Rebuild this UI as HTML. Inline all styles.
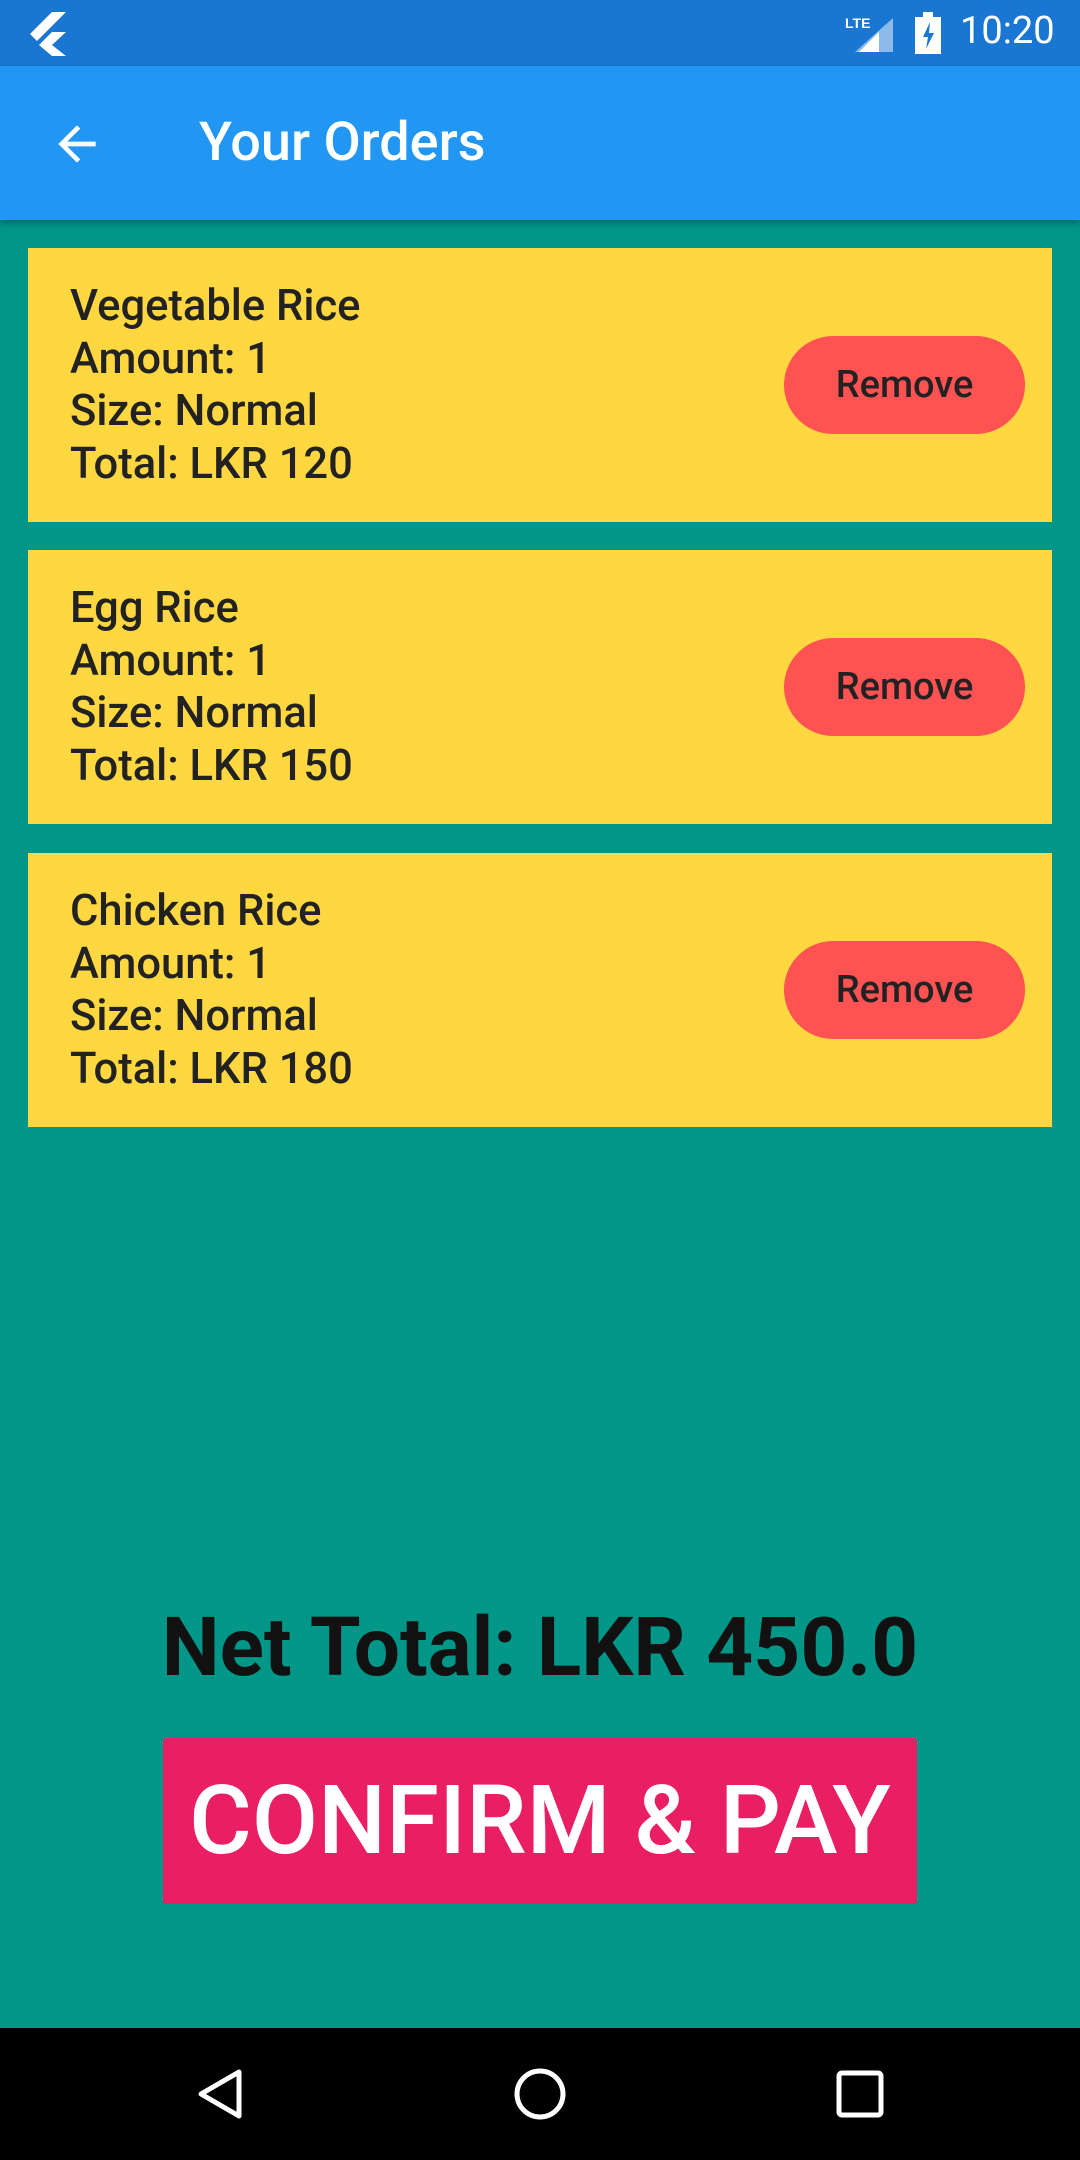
<!DOCTYPE html>
<html><head><meta charset="utf-8"><style>
*{margin:0;padding:0;box-sizing:border-box}
body{width:1080px;height:2160px;background:#009688;font-family:"Roboto","Liberation Sans",sans-serif;position:relative;overflow:hidden}
.sb{position:absolute;top:0;left:0;width:1080px;height:66px;background:#1976D2;color:#fff}
.ab{position:absolute;top:66px;left:0;width:1080px;height:154px;background:#2196F3;box-shadow:0 3px 6px rgba(0,0,0,.3)}
.ab .t{position:absolute;left:199px;top:45px;font-size:54px;color:#fff;font-weight:500}
.card{position:absolute;left:28px;width:1024px;height:274px;background:#FFD740}
.card .tx{position:absolute;left:42px;top:32px;font-size:43.5px;line-height:52.5px;color:#222;font-weight:500}
.card .rm{position:absolute;left:756px;top:88px;width:241px;height:98px;border-radius:49px;background:#FF5252;color:#222;font-size:38px;text-align:center;line-height:98px;font-weight:500}
.net{position:absolute;top:1600px;left:0;width:1080px;text-align:center;font-size:82px;font-weight:bold;color:#111}
.pay{position:absolute;left:163px;top:1738px;width:754px;height:166px;background:#E91E63;color:#fff;font-size:96px;text-align:center;line-height:166px;border-radius:3px;font-weight:500}
.nav{position:absolute;top:2028px;left:0;width:1080px;height:132px;background:#000}
</style></head><body>
<div class="sb">
<svg style="position:absolute;left:30px;top:12px" width="40" height="44" viewBox="0 0 40 44"><path d="M22 0L0 22l7 7L36 0z M22 20L9 33l13 11h14L22 33l14-13z" fill="#fff"/></svg>
<svg style="position:absolute;left:845px;top:14px" width="48" height="40" viewBox="0 0 48 40"><text x="0" y="14" font-size="14" fill="#fff" font-family="Liberation Sans" font-weight="bold">LTE</text><path d="M48 4V38H10z" fill="#fff" opacity=".5"/><path d="M34 18V38H14z" fill="#fff"/></svg>
<svg style="position:absolute;left:915px;top:12px" width="26" height="42" viewBox="0 0 26 42"><rect x="0" y="5" width="26" height="37" fill="#fff"/><rect x="8" y="0" width="10" height="6" fill="#fff"/><path d="M15 10l-7 15h5l-2 12 8-16h-5z" fill="#1976D2"/></svg>
<div style="position:absolute;left:960px;top:9px;font-size:38px;color:#fff">10:20</div>
</div>
<div class="ab">
<svg style="position:absolute;left:49px;top:50px" width="56" height="56" viewBox="0 0 24 24"><path d="M20 11H7.83l5.59-5.59L12 4l-8 8 8 8 1.41-1.41L7.83 13H20v-2z" fill="#fff"/></svg>
<div class="t">Your Orders</div></div>
<div class="card" style="top:248px"><div class="tx">Vegetable Rice<br>Amount: 1<br>Size: Normal<br>Total: LKR 120</div><div class="rm">Remove</div></div>
<div class="card" style="top:550px"><div class="tx">Egg Rice<br>Amount: 1<br>Size: Normal<br>Total: LKR 150</div><div class="rm">Remove</div></div>
<div class="card" style="top:853px"><div class="tx">Chicken Rice<br>Amount: 1<br>Size: Normal<br>Total: LKR 180</div><div class="rm">Remove</div></div>
<div class="net">Net Total: LKR 450.0</div>
<div class="pay">CONFIRM &amp; PAY</div>
<div class="nav">
<svg style="position:absolute;left:196px;top:66px;transform:translateY(-50%)" width="48" height="52" viewBox="0 0 48 52"><path d="M43 4L5 26l38 22z" fill="none" stroke="#fff" stroke-width="5" stroke-linejoin="round"/></svg>
<svg style="position:absolute;left:514px;top:40px" width="52" height="52" viewBox="0 0 52 52"><circle cx="26" cy="26" r="23" fill="none" stroke="#fff" stroke-width="5"/></svg>
<svg style="position:absolute;left:836px;top:42px" width="48" height="48" viewBox="0 0 48 48"><rect x="3" y="3" width="42" height="42" rx="3" fill="none" stroke="#fff" stroke-width="5"/></svg>
</div>
</body></html>
